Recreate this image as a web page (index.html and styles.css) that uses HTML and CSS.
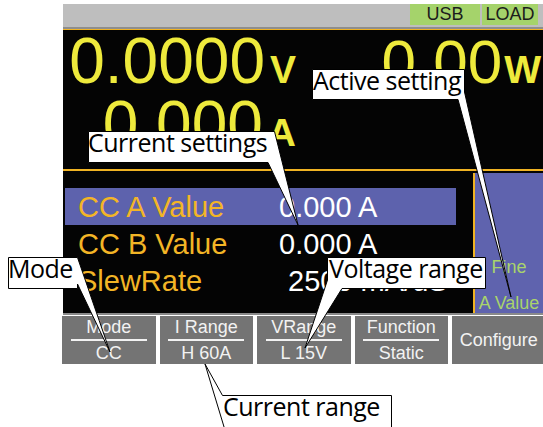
FILE: index.html
```html
<!DOCTYPE html>
<html lang="en">
<head>
  <meta charset="UTF-8">
  <title>Load display</title>
  <link rel="stylesheet" href="styles.css">
</head>
<body>

  <div class="screen">
    <div class="status">
      <span class="tag usb">USB</span>
      <span class="tag load">LOAD</span>
    </div>

    <div class="measure">
      <div class="readings">
        <div class="reading">0.0000<span class="unit">V</span></div>
        <div class="reading">0.000<span class="unit">A</span></div>
      </div>
      <div class="reading power">0.00<span class="unit">W</span></div>
    </div>

    <div class="settings">
      <div class="list">
        <div class="row active"><span class="name">CC A Value</span><span class="val">0.000 A</span></div>
        <div class="row"><span class="name">CC B Value</span><span class="val">0.000 A</span></div>
        <div class="row"><span class="name">SlewRate</span><span class="val wide">2500 mA/uS</span></div>
      </div>
      <div class="side">
        <span>Fine</span>
        <span>A Value</span>
      </div>
    </div>
  </div>

  <div class="keys">
    <div class="key"><span class="top">Mode</span><span class="sub">CC</span></div>
    <div class="key"><span class="top">I Range</span><span class="sub">H 60A</span></div>
    <div class="key"><span class="top">VRange</span><span class="sub">L 15V</span></div>
    <div class="key"><span class="top">Function</span><span class="sub">Static</span></div>
    <div class="key single"><span>Configure</span></div>
  </div>

  <!-- callout shapes, labels sit on top -->
  <svg class="leaders" width="543" height="427" viewBox="0 0 543 427">
    <path d="M312.5,69.5 H464.5 V92 L511,297 L458,99.5 H312.5 Z"/>
    <path d="M88.5,131.5 H274.5 L298,225 L268,162.5 H88.5 Z"/>
    <path d="M8.5,257.5 H77.5 L110,352 L77.5,284 V288.5 H8.5 Z"/>
    <path d="M327.5,257.5 H485.5 V288.5 H342 L305,348 L327.5,280 Z"/>
    <path d="M222.5,395.5 H391.5 V440 H228 L205,364 Z"/>
  </svg>
  <div class="callout c-active">Active setting</div>
  <div class="callout c-settings">Current settings</div>
  <div class="callout c-mode">Mode</div>
  <div class="callout c-vrange">Voltage range</div>
  <div class="callout c-irange">Current range</div>

</body>
</html>
```

FILE: styles.css
```css
html, body {
  margin: 0;
  overflow: hidden;
}

body {
  position: relative;
  width: 543px;
  height: 427px;
  background: #fff;
  font-family: "Liberation Sans", Arial, sans-serif;
}

.screen {
  width: 480px;
  margin: 4px 0 0 63px;
  background: #040404;
  border-bottom: 2px solid #8a8a8a;
}

/* top status bar */
.status {
  height: 23px;
  background: #bebebe;
  border-bottom: 2px solid #8e8e8e;
  display: flex;
  justify-content: flex-end;
  gap: 2px;
  padding-right: 5px;
}

.tag {
  height: 21px;
  line-height: 20px;
  background: #a5d36b;
  color: #1c1c1c;
  font-size: 18px;
  text-align: center;
}

.usb { width: 70px; }
.load { width: 56px; }

/* big readings */
.measure {
  height: 139px;
  border-top: 1px solid #f0b323;
  display: flex;
  color: #eeea3c;
}

.readings {
  width: 233px;
  text-align: right;
}

.reading {
  font-size: 64px;
  line-height: 63px;
  white-space: nowrap;
}

.unit {
  font-size: 39px;
  font-weight: bold;
  line-height: 1;
  margin-left: 5px;
}

.power {
  margin-left: auto;
  padding-right: 2px;
  font-size: 62px;
}

.power .unit {
  margin-left: 2px;
}

/* settings list */
.settings {
  height: 142px;
  border-top: 2px solid #f0b323;
  display: flex;
}

.list {
  flex: 1;
  padding: 17px 0 0 2px;
}

.row {
  display: flex;
  width: 391px;
  height: 37px;
  font-size: 29px;
  line-height: 39px;
  white-space: nowrap;
}

.row.active {
  background: #5d62ad;
}

.name {
  width: 214px;
  padding-left: 13px;
  box-sizing: border-box;
  color: #f3b526;
}

.val {
  color: #fff;
}

.val.wide {
  padding-left: 9px;
}

.side {
  width: 68px;
  margin-top: 2px;
  border-left: 2px solid #f0b323;
  background: #5f63ae;
  display: flex;
  flex-direction: column;
  justify-content: flex-end;
  align-items: center;
  gap: 16px;
  color: #a9d46b;
  font-size: 18px;
  line-height: 20px;
  white-space: nowrap;
}

/* soft keys */
.keys {
  display: grid;
  grid-template-columns: repeat(5, 93.5px);
  gap: 4px;
  height: 48px;
  margin: 1px 0 0 62px;
}

.key {
  background: #747474;
  color: #f2f2f2;
  font-size: 18px;
  line-height: 20px;
  display: flex;
  flex-direction: column;
  align-items: center;
  padding-top: 1px;
  white-space: nowrap;
}

.key .top {
  width: 76px;
  padding-bottom: 2px;
  border-bottom: 2px solid #f2f2f2;
  text-align: center;
}

.key .sub {
  margin-top: 2px;
}

.key.single {
  justify-content: center;
  padding-top: 0;
}

/* annotation callouts */
.leaders {
  position: absolute;
  left: 0;
  top: 0;
}

.leaders path {
  fill: #fff;
  stroke: #000;
  stroke-width: 1;
}

.callout {
  position: absolute;
  font-family: "Open Sans", sans-serif;
  font-size: 25px;
  line-height: 21px;
  letter-spacing: -0.5px;
  color: #000;
  white-space: nowrap;
}

.c-active { left: 313px; top: 70px; }
.c-settings { left: 88px; top: 132px; }
.c-mode { left: 8px; top: 258px; }
.c-vrange { left: 329px; top: 258px; }
.c-irange { left: 223px; top: 396px; }
```
